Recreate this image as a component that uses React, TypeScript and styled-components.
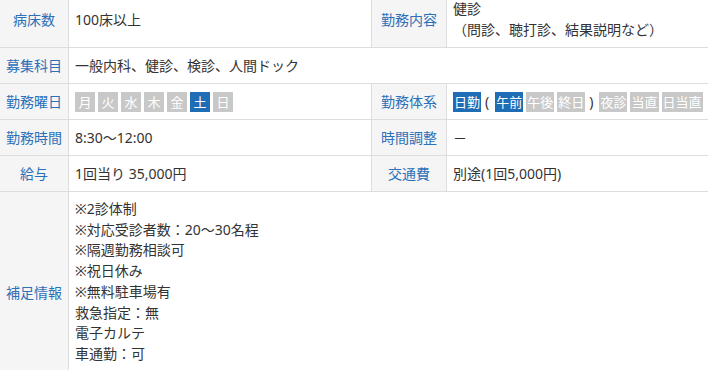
import styled, { createGlobalStyle } from "styled-components"

const GlobalStyle = createGlobalStyle`
  * { box-sizing: border-box; }
  body {
    margin: 0;
    background: #fff;
    font-family: "Noto Sans", "Noto Sans CJK JP", sans-serif;
    font-size: 14px;
    color: #333;
  }
`

const DAYS: [string, boolean][] = [
  ["月", false],
  ["火", false],
  ["水", false],
  ["木", false],
  ["金", false],
  ["土", true],
  ["日", false],
]

const NOTES = [
  "※2診体制",
  "※対応受診者数：20〜30名程",
  "※隔週勤務相談可",
  "※祝日休み",
  "※無料駐車場有",
  "救急指定：無",
  "電子カルテ",
  "車通勤：可",
]

export default function App() {
  return (
    <>
      <GlobalStyle />
      <SSheet>
        <SLabel>病床数</SLabel>
        <SValue>100床以上</SValue>
        <SLabel $right>勤務内容</SLabel>
        <SValue>
          <span>健診</span>
          <span>（問診、聴打診、結果説明など）</span>
        </SValue>

        <SLabel>募集科目</SLabel>
        <SValue $wide>一般内科、健診、検診、人間ドック</SValue>

        <SLabel>勤務曜日</SLabel>
        <SValue>
          <STags>
            {DAYS.map(([d, on]) => (
              <STag key={d} $on={on} $square>
                {d}
              </STag>
            ))}
          </STags>
        </SValue>
        <SLabel $right>勤務体系</SLabel>
        <SValue>
          <STags>
            <STag $on>日勤</STag>
            <SParen>(</SParen>
            <STag $on>午前</STag>
            <STag>午後</STag>
            <STag>終日</STag>
            <SParen>)</SParen>
            <STag>夜診</STag>
            <STag>当直</STag>
            <STag>日当直</STag>
          </STags>
        </SValue>

        <SLabel>勤務時間</SLabel>
        <SValue>8:30〜12:00</SValue>
        <SLabel $right>時間調整</SLabel>
        <SValue>－</SValue>

        <SLabel>給与</SLabel>
        <SValue>1回当り 35,000円</SValue>
        <SLabel $right>交通費</SLabel>
        <SValue>別途(1回5,000円)</SValue>

        <SLabel>補足情報</SLabel>
        <SNotes>
          {NOTES.map((n) => (
            <div key={n}>{n}</div>
          ))}
          <br />
        </SNotes>
      </SSheet>
    </>
  )
}

const SSheet = styled.div`
  display: grid;
  grid-template-columns: 69px 302px 76px 1fr;
  width: 708px;
  margin-top: -9px;
  line-height: 21px;
`

const SLabel = styled.div<{ $right?: boolean }>`
  display: flex;
  align-items: center;
  justify-content: center;
  padding: 7px 0;
  background: #f5f5f5;
  color: #2b70b9;
  white-space: nowrap;
  border-bottom: 1px solid #ddd;
  border-right: 1px solid #ddd;
  border-left: ${(p) => (p.$right ? "1px solid #ddd" : "none")};
`

const SValue = styled.div<{ $wide?: boolean }>`
  display: flex;
  flex-direction: column;
  justify-content: center;
  padding: 7px 6px;
  border-bottom: 1px solid #ddd;
  white-space: nowrap;
  grid-column: ${(p) => (p.$wide ? "span 3" : "auto")};
`

const SNotes = styled.div`
  grid-column: span 3;
  padding: 7px 6px;
  line-height: 20.7px;
  border-bottom: 1px solid #ddd;
`

const STags = styled.div`
  display: flex;
  align-items: center;
  gap: 3px;
`

const STag = styled.span<{ $on?: boolean; $square?: boolean }>`
  display: inline-block;
  height: 20px;
  line-height: 20px;
  ${(p) => (p.$square ? "width: 20px;" : "padding: 0 1px;")}
  text-align: center;
  font-size: 13px;
  color: #fff;
  background: ${(p) => (p.$on ? "#1f6db5" : "#c8c8c8")};
`

const SParen = styled.span`
  padding: 0 3px 0 1px;
  color: #333;
`
